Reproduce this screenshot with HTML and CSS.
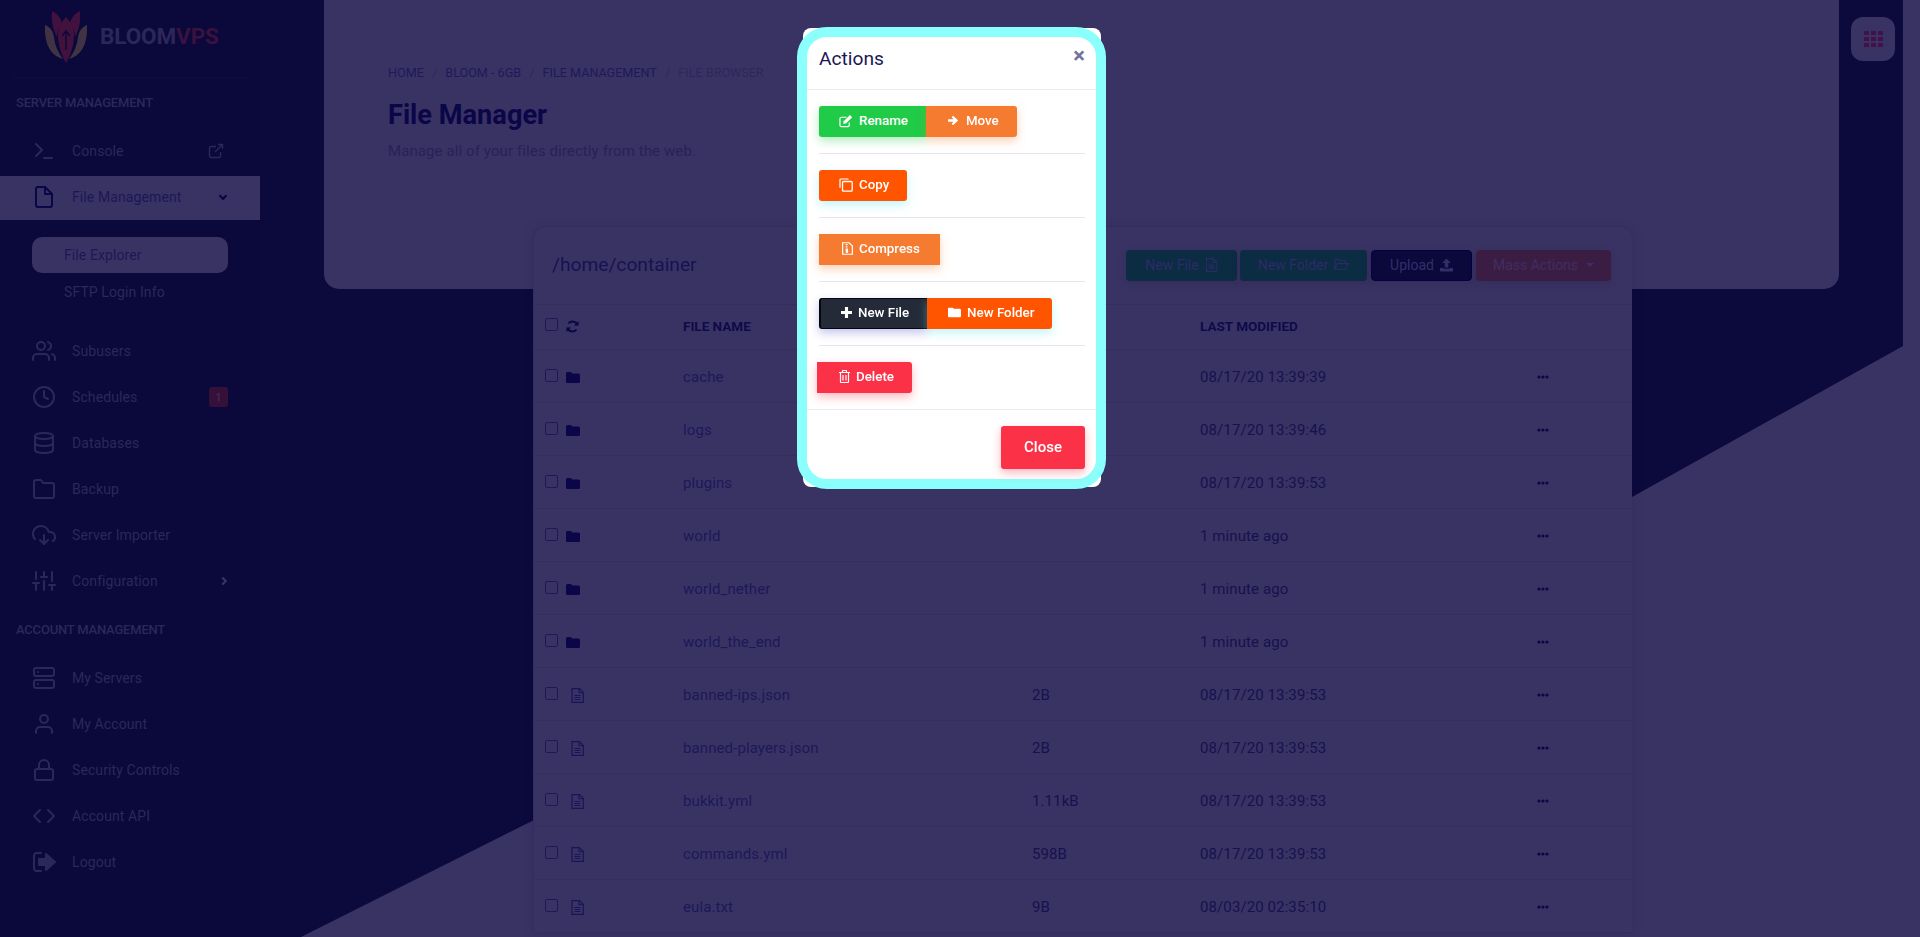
FILE: index.html
```html
<!DOCTYPE html>
<html lang="en">
<head>
    <meta charset="UTF-8">
    <title>BloomVPS - File Manager</title>
    <link rel="stylesheet" href="styles.css">
</head>
<body>
    <svg class="sprite" xmlns="http://www.w3.org/2000/svg">
        <symbol id="i-folder-solid" viewBox="0 0 14 11"><path d="M1.5 0h3.4l1.3 1.5h6.3A1.5 1.5 0 0 1 14 3v6.5A1.5 1.5 0 0 1 12.500 11h-11A1.500 1.500 0 0 1 0 9.500v-8A1.500 1.500 0 0 1 1.500 0z"/></symbol>
        <symbol id="i-doc" viewBox="0 0 13 15"><path d="M1 .7h7.500L12.300 4.500v9.800H1z" fill="none" stroke="currentColor" stroke-width="1.200"/><path d="M8 .7v4h4.300M3.500 7.500h6M3.500 9.500h6M3.500 11.500h6" fill="none" stroke="currentColor" stroke-width="1.100"/></symbol>
        <symbol id="i-dots" viewBox="0 0 12 4"><circle cx="2" cy="2" r="1.600"/><circle cx="6" cy="2" r="1.600"/><circle cx="10" cy="2" r="1.600"/></symbol>
    </svg>

    <aside class="sidebar">
        <div class="logo">
            <svg class="logo-mark" viewBox="0 0 44 54">
                <path d="M1 15c5 2 8 6 9 12 1 9 4 15 9 22C8 46 0 36 1 15z" fill="#3f3344"/>
                <path d="M43 15c-5 2-8 6-9 12-1 9-4 15-9 22 11-3 19-13 18-34z" fill="#3f3344"/>
                <path d="M8 1c6 3 9 7 10 13-3 3-5 8-5 13C9 20 7 11 8 1z" fill="#42123f"/>
                <path d="M36 1c-6 3-9 7-10 13 3 3 5 8 5 13 4-7 6-16 5-26z" fill="#42123f"/>
                <path d="M22 7c5 5 8 11 8 18 0 11-4 21-8 28-4-7-8-17-8-28 0-7 3-13 8-18z" fill="#42123f"/>
                <path d="M22 20v20M18 26l4-5 4 5" stroke="#0b083b" stroke-width="1.500" fill="none"/>
            </svg>
            <span class="logo-text">BLOOM<span class="logo-accent">VPS</span></span>
        </div>

        <div class="nav-label">SERVER MANAGEMENT</div>
        <a class="nav-row">
            <svg class="nav-icon" viewBox="0 0 24 24"><polyline points="4 17 10 11 4 5"/><line x1="12" y1="19" x2="20" y2="19"/></svg>
            <span class="nav-text">Console</span>
            <svg class="nav-end" viewBox="0 0 16 16"><path d="M12.500 9v4a1.500 1.500 0 0 1-1.500 1.500H3A1.500 1.500 0 0 1 1.500 13V5A1.500 1.500 0 0 1 3 3.500h5"/><path d="M10 1.500h4.500V6M14.500 1.500L7 9"/></svg>
        </a>
        <a class="nav-row active">
            <svg class="nav-icon" viewBox="0 0 24 24"><path d="M13 2H6a2 2 0 0 0-2 2v16a2 2 0 0 0 2 2h12a2 2 0 0 0 2-2V9z"/><polyline points="13 2 13 9 20 9"/></svg>
            <span class="nav-text">File Management</span>
            <svg class="nav-chevron" viewBox="0 0 10 10"><path d="M1.500 3.200L5 6.800l3.500-3.600"/></svg>
        </a>
        <div class="submenu">
            <a class="sub-row current">File Explorer</a>
            <a class="sub-row">SFTP Login Info</a>
        </div>
        <a class="nav-row">
            <svg class="nav-icon" viewBox="0 0 24 24"><path d="M17 21v-2a4 4 0 0 0-4-4H5a4 4 0 0 0-4 4v2"/><circle cx="9" cy="7" r="4"/><path d="M23 21v-2a4 4 0 0 0-3-3.870"/><path d="M16 3.130a4 4 0 0 1 0 7.750"/></svg>
            <span class="nav-text">Subusers</span>
        </a>
        <a class="nav-row">
            <svg class="nav-icon" viewBox="0 0 24 24"><circle cx="12" cy="12" r="10"/><polyline points="12 6 12 12 16 14"/></svg>
            <span class="nav-text">Schedules</span>
            <span class="nav-badge">1</span>
        </a>
        <a class="nav-row">
            <svg class="nav-icon" viewBox="0 0 24 24"><ellipse cx="12" cy="5" rx="9" ry="3"/><path d="M21 12c0 1.660-4 3-9 3s-9-1.340-9-3"/><path d="M3 5v14c0 1.660 4 3 9 3s9-1.340 9-3V5"/></svg>
            <span class="nav-text">Databases</span>
        </a>
        <a class="nav-row">
            <svg class="nav-icon" viewBox="0 0 24 24"><path d="M22 19a2 2 0 0 1-2 2H4a2 2 0 0 1-2-2V5a2 2 0 0 1 2-2h5l2 3h9a2 2 0 0 1 2 2z"/></svg>
            <span class="nav-text">Backup</span>
        </a>
        <a class="nav-row">
            <svg class="nav-icon" viewBox="0 0 24 24"><polyline points="8 17 12 21 16 17"/><line x1="12" y1="12" x2="12" y2="21"/><path d="M20.880 18.090A5 5 0 0 0 18 9h-1.260A8 8 0 1 0 3 16.290"/></svg>
            <span class="nav-text">Server Importer</span>
        </a>
        <a class="nav-row">
            <svg class="nav-icon" viewBox="0 0 24 24"><path d="M4 21v-7M4 10V3M12 21v-9M12 8V3M20 21v-5M20 12V3M1 14h6M9 8h6M17 16h6"/></svg>
            <span class="nav-text">Configuration</span>
            <svg class="nav-chevron side" viewBox="0 0 10 10"><path d="M3.200 1.500L6.800 5 3.200 8.500"/></svg>
        </a>

        <div class="nav-label second">ACCOUNT MANAGEMENT</div>
        <a class="nav-row">
            <svg class="nav-icon" viewBox="0 0 24 24"><rect x="2" y="2" width="20" height="8" rx="2"/><rect x="2" y="14" width="20" height="8" rx="2"/><line x1="6" y1="6" x2="6.010" y2="6"/><line x1="6" y1="18" x2="6.010" y2="18"/></svg>
            <span class="nav-text">My Servers</span>
        </a>
        <a class="nav-row">
            <svg class="nav-icon" viewBox="0 0 24 24"><path d="M20 21v-2a4 4 0 0 0-4-4H8a4 4 0 0 0-4 4v2"/><circle cx="12" cy="7" r="4"/></svg>
            <span class="nav-text">My Account</span>
        </a>
        <a class="nav-row">
            <svg class="nav-icon" viewBox="0 0 24 24"><rect x="3" y="11" width="18" height="11" rx="2"/><path d="M7 11V7a5 5 0 0 1 10 0v4"/></svg>
            <span class="nav-text">Security Controls</span>
        </a>
        <a class="nav-row">
            <svg class="nav-icon" viewBox="0 0 24 24"><polyline points="16 18 22 12 16 6"/><polyline points="8 6 2 12 8 18"/></svg>
            <span class="nav-text">Account API</span>
        </a>
        <a class="nav-row">
            <svg class="nav-icon" viewBox="0 0 24 24"><path d="M9 3H4.500A2.500 2.500 0 0 0 2 5.500v13A2.500 2.500 0 0 0 4.500 21H9"/><path class="solid" d="M7 9h7V4l9 8-9 8v-5H7z"/></svg>
            <span class="nav-text">Logout</span>
        </a>
    </aside>

    <main class="main">
        <div class="main-bg"></div>
        <button class="apps-btn">
            <span class="apps-grid"><i></i><i></i><i></i><i></i><i></i><i></i><i></i><i></i><i></i></span>
        </button>

        <header class="page-head">
            <nav class="crumbs">
                <a>HOME</a><span class="crumb-sep">/</span>
                <a>BLOOM - 6GB</a><span class="crumb-sep">/</span>
                <a>FILE MANAGEMENT</a><span class="crumb-sep">/</span>
                <span class="crumb-last">FILE BROWSER</span>
            </nav>
            <h1>File Manager</h1>
            <p class="page-sub">Manage all of your files directly from the web.</p>
        </header>

        <section class="files-card">
            <div class="files-top">
                <h2>/home/container</h2>
                <div class="files-actions">
                    <a class="top-btn teal">New File
                        <svg viewBox="0 0 13 15"><use href="#i-doc"/></svg>
                    </a>
                    <a class="top-btn teal wide">New Folder
                        <svg viewBox="0 0 16 13"><path d="M1 11.500V2.500A1.500 1.500 0 0 1 2.500 1h3L7 2.500h4A1.500 1.500 0 0 1 12.500 4v1.500M1 11.500L3.500 5.500H15l-2.500 6z" fill="none" stroke="currentColor" stroke-width="1.200"/></svg>
                    </a>
                    <a class="top-btn navy">Upload
                        <svg viewBox="0 0 13 13"><path d="M6.500 0L11 4.500H8.300V9H4.700V4.500H2zM0 9.500h3.500v.8h6v-.8H13V13H0z" fill="currentColor"/></svg>
                    </a>
                    <a class="top-btn plum">Mass Actions <span class="caret"></span></a>
                </div>
            </div>

            <div class="file-row head">
                <div class="cell-check"><span class="check"></span>
                    <svg class="refresh" viewBox="0 0 14 14"><path d="M12.500 5.500A5.700 5.700 0 0 0 2.600 3.800M1.500 8.500a5.700 5.700 0 0 0 9.900 1.700" fill="none" stroke="currentColor" stroke-width="2"/><path d="M13.500 1v5h-5zM.5 13V8h5z" fill="currentColor"/></svg>
                </div>
                <div>FILE NAME</div><div></div><div>LAST MODIFIED</div><div></div>
            </div>

            <div class="file-row">
                <div class="cell-check"><span class="check"></span><svg class="ic-folder"><use href="#i-folder-solid"/></svg></div>
                <div class="name">cache</div><div class="size"></div><div class="date">08/17/20 13:39:39</div>
                <div><svg class="dots"><use href="#i-dots"/></svg></div>
            </div>
            <div class="file-row">
                <div class="cell-check"><span class="check"></span><svg class="ic-folder"><use href="#i-folder-solid"/></svg></div>
                <div class="name">logs</div><div class="size"></div><div class="date">08/17/20 13:39:46</div>
                <div><svg class="dots"><use href="#i-dots"/></svg></div>
            </div>
            <div class="file-row">
                <div class="cell-check"><span class="check"></span><svg class="ic-folder"><use href="#i-folder-solid"/></svg></div>
                <div class="name">plugins</div><div class="size"></div><div class="date">08/17/20 13:39:53</div>
                <div><svg class="dots"><use href="#i-dots"/></svg></div>
            </div>
            <div class="file-row">
                <div class="cell-check"><span class="check"></span><svg class="ic-folder"><use href="#i-folder-solid"/></svg></div>
                <div class="name">world</div><div class="size"></div><div class="date">1 minute ago</div>
                <div><svg class="dots"><use href="#i-dots"/></svg></div>
            </div>
            <div class="file-row">
                <div class="cell-check"><span class="check"></span><svg class="ic-folder"><use href="#i-folder-solid"/></svg></div>
                <div class="name">world_nether</div><div class="size"></div><div class="date">1 minute ago</div>
                <div><svg class="dots"><use href="#i-dots"/></svg></div>
            </div>
            <div class="file-row">
                <div class="cell-check"><span class="check"></span><svg class="ic-folder"><use href="#i-folder-solid"/></svg></div>
                <div class="name">world_the_end</div><div class="size"></div><div class="date">1 minute ago</div>
                <div><svg class="dots"><use href="#i-dots"/></svg></div>
            </div>
            <div class="file-row">
                <div class="cell-check"><span class="check"></span><svg class="ic-doc"><use href="#i-doc"/></svg></div>
                <div class="name">banned-ips.json</div><div class="size">2B</div><div class="date">08/17/20 13:39:53</div>
                <div><svg class="dots"><use href="#i-dots"/></svg></div>
            </div>
            <div class="file-row">
                <div class="cell-check"><span class="check"></span><svg class="ic-doc"><use href="#i-doc"/></svg></div>
                <div class="name">banned-players.json</div><div class="size">2B</div><div class="date">08/17/20 13:39:53</div>
                <div><svg class="dots"><use href="#i-dots"/></svg></div>
            </div>
            <div class="file-row">
                <div class="cell-check"><span class="check"></span><svg class="ic-doc"><use href="#i-doc"/></svg></div>
                <div class="name">bukkit.yml</div><div class="size">1.11kB</div><div class="date">08/17/20 13:39:53</div>
                <div><svg class="dots"><use href="#i-dots"/></svg></div>
            </div>
            <div class="file-row">
                <div class="cell-check"><span class="check"></span><svg class="ic-doc"><use href="#i-doc"/></svg></div>
                <div class="name">commands.yml</div><div class="size">598B</div><div class="date">08/17/20 13:39:53</div>
                <div><svg class="dots"><use href="#i-dots"/></svg></div>
            </div>
            <div class="file-row">
                <div class="cell-check"><span class="check"></span><svg class="ic-doc"><use href="#i-doc"/></svg></div>
                <div class="name">eula.txt</div><div class="size">9B</div><div class="date">08/03/20 02:35:10</div>
                <div><svg class="dots"><use href="#i-dots"/></svg></div>
            </div>
        </section>
    </main>

    <div class="modal">
        <div class="modal-frame">
            <div class="modal-head">
                <h3>Actions</h3>
                <span class="modal-x">&times;</span>
            </div>
            <div class="modal-body">
                <div class="action-group">
                    <a class="act green">
                        <svg class="ic-edit" viewBox="0 0 15 14"><path d="M11 8.500v3A1.500 1.500 0 0 1 9.500 13h-7A1.500 1.500 0 0 1 1 11.500v-7A1.500 1.500 0 0 1 2.500 3H8" fill="none" stroke="currentColor" stroke-width="1.300"/><path d="M5 7.200L11.700.6l2.400 2.300-6.700 6.700-2.900.4z" fill="currentColor"/></svg>
                        Rename</a><a class="act orange">
                        <svg class="ic-move" viewBox="0 0 13 13"><path d="M0 5h6.500L4.300 2.700 6 1l6 5.500L6 12l-1.700-1.700L6.500 8H0z" fill="currentColor"/></svg>
                        Move</a>
                </div>
                <div class="action-group">
                    <a class="act flame">
                        <svg class="ic-edit" viewBox="0 0 14 14"><path d="M9.500 1H1.800a.8.800 0 0 0-.8.800v8" fill="none" stroke="currentColor" stroke-width="1.200"/><rect x="3.500" y="3.500" width="9.700" height="9.700" rx="1" fill="none" stroke="currentColor" stroke-width="1.300"/></svg>
                        Copy</a>
                </div>
                <div class="action-group">
                    <a class="act orange square">
                        <svg viewBox="0 0 12 14"><path d="M.7.700h7L11.300 4.300v9H.7z" fill="none" stroke="currentColor" stroke-width="1.300"/><path d="M4 2h2v1.500H4zM4 4.500h2V6H4zM4 7h2.400l.4 3.500a1.400 1.400 0 1 1-2.800 0z" fill="currentColor"/></svg>
                        Compress</a>
                </div>
                <div class="action-group">
                    <a class="act dark">
                        <svg viewBox="0 0 12 12"><path d="M4.300 0h3.400v4.300H12v3.400H7.700V12H4.300V7.700H0V4.300h4.300z" fill="currentColor"/></svg>
                        New File</a><a class="act flame">
                        <svg class="ic-move" viewBox="0 0 14 11"><use href="#i-folder-solid" fill="currentColor"/></svg>
                        New Folder</a>
                </div>
                <div class="action-group last">
                    <a class="act red pulled">
                        <svg viewBox="0 0 11 13"><path d="M0 2.500h11M3.500 2.500V1.200A.7.700 0 0 1 4.200.5h2.600a.7.700 0 0 1 .7.700v1.300M1.500 2.500v9A1.200 1.200 0 0 0 2.700 12.700h5.600a1.200 1.200 0 0 0 1.200-1.200v-9M4 5v5.500M7 5v5.500" fill="none" stroke="currentColor" stroke-width="1.200"/></svg>
                        Delete</a>
                </div>
            </div>
            <div class="modal-foot">
                <a class="close-btn">Close</a>
            </div>
        </div>
    </div>
</body>
</html>
```

FILE: styles.css
```css
:root {
    --navy: #0b083b;
    --navy-main: #0c093d;
    --lavender: #393363;
    --line: #342e5d;
    --ink: #0a0648;
    --ink-soft: #1c1758;
    --muted: #2c275b;
    --cyan: #8bfffb;
    --font: 'Roboto', 'Liberation Sans', sans-serif;
}

* {
    margin: 0;
    padding: 0;
    box-sizing: border-box;
}

html, body {
    height: 100%;
    overflow: hidden;
}

body {
    display: flex;
    background: var(--lavender);
    font-family: var(--font);
    color: var(--ink-soft);
}

a {
    text-decoration: none;
}

.sprite {
    display: none;
}

/* sidebar */
.sidebar {
    width: 260px;
    flex-shrink: 0;
    height: 937px;
    background: var(--navy);
    position: relative;
    z-index: 2;
}

.logo {
    height: 78px;
    margin: 0 13px;
    padding-left: 31px;
    display: flex;
    align-items: center;
    gap: 12px;
    border-bottom: 1px solid #100d42;
}

.logo-mark {
    width: 44px;
    height: 54px;
    margin-top: -3px;
}

.logo-text {
    font-size: 22.500px;
    font-weight: 700;
    letter-spacing: -0.1px;
    color: #2c275b;
    margin-top: -5px;
}

.logo-accent {
    color: #3a1240;
}

.nav-label {
    margin-top: 17px;
    margin-bottom: 17px;
    padding-left: 16px;
    height: 16px;
    line-height: 16px;
    font-size: 13px;
    font-weight: 500;
    letter-spacing: -0.2px;
    color: var(--muted);
}

.nav-label.second {
    margin-top: 18px;
}

.nav-row {
    height: 46px;
    padding: 0 32px;
    display: flex;
    align-items: center;
    gap: 16px;
    color: var(--muted);
}

.nav-row.active {
    height: 44px;
    margin-top: 2px;
    padding-bottom: 2px;
    background: var(--lavender);
    color: var(--ink);
}

.nav-icon {
    width: 24px;
    height: 24px;
    fill: none;
    stroke: currentColor;
    stroke-width: 2;
    stroke-linecap: round;
    stroke-linejoin: round;
    flex-shrink: 0;
}

.nav-icon .solid {
    fill: currentColor;
}

.nav-text {
    flex: 1;
    font-size: 14px;
    letter-spacing: 0.1px;
    white-space: nowrap;
}

.nav-row.active .nav-text {
    color: var(--ink-soft);
}

.nav-end {
    width: 16px;
    height: 16px;
    margin-right: 4px;
    fill: none;
    stroke: currentColor;
    stroke-width: 1.4;
}

.nav-chevron {
    width: 10px;
    height: 10px;
    fill: none;
    stroke: currentColor;
    stroke-width: 2.200;
}

.nav-chevron.side {
    margin-right: -1px;
    stroke: var(--lavender);
}

.nav-badge {
    width: 19px;
    height: 20px;
    border-radius: 3px;
    background: #351039;
    color: #432655;
    font-size: 11px;
    font-weight: 700;
    display: flex;
    align-items: center;
    justify-content: center;
}

.submenu {
    padding: 17px 32px 18px;
}

.sub-row {
    display: flex;
    align-items: center;
    height: 36px;
    padding-left: 32px;
    border-radius: 10px;
    font-size: 14px;
    letter-spacing: 0.1px;
    color: var(--muted);
}

.sub-row + .sub-row {
    margin-top: 1px;
}

.sub-row.current {
    background: var(--lavender);
    color: var(--ink-soft);
}

/* main area */
.main {
    flex: 1;
    position: relative;
    height: 937px;
    overflow: hidden;
    padding-left: 64px;
    background: var(--lavender);
}

.main-bg {
    position: absolute;
    inset: 0;
    background: var(--navy-main);
    clip-path: polygon(0 0, 1643px 0, 1643px 346px, 1372px 497px, 1000px 600px, 272px 821px, 41px 937px, 0 937px);
}

.apps-btn {
    position: absolute;
    top: 17px;
    left: 1591px;
    width: 44px;
    height: 44px;
    border: 0;
    border-radius: 12px;
    background: var(--lavender);
    display: flex;
    align-items: center;
    justify-content: center;
}

.apps-grid {
    display: grid;
    grid-template-columns: repeat(3, 5px);
    grid-auto-rows: 4px;
    gap: 2px;
}

.apps-grid i {
    background: #431149;
}

.page-head {
    position: relative;
    width: 1515px;
    height: 289px;
    padding: 63px 64px 0;
    background: var(--lavender);
    border-radius: 0 0 15px 15px;
}

.crumbs {
    display: flex;
    align-items: center;
    height: 18px;
    font-size: 12.600px;
    color: #1e195c;
}

.crumb-sep {
    width: 21.500px;
    text-align: center;
    color: #2d285b;
}

.crumb-last {
    color: #2d285a;
}

h1 {
    margin-top: 16px;
    font-size: 27.200px;
    font-weight: 700;
    line-height: 36px;
    color: var(--ink);
}

.page-sub {
    margin-top: 8px;
    font-size: 15px;
    line-height: 20px;
    letter-spacing: 0.1px;
    color: #272258;
}

/* file table */
.files-card {
    position: relative;
    width: 1099px;
    margin: -63px 0 0 209px;
    background: var(--lavender);
    border-left: 1px solid var(--line);
    border-top: 1px solid var(--line);
    border-radius: 12px 12px 0 0;
    box-shadow: 0 0 12px rgba(20, 15, 70, 0.12);
}

.files-top {
    height: 78px;
    padding: 0 21px 2px 18px;
    display: flex;
    align-items: center;
    justify-content: space-between;
    border-bottom: 1px solid var(--line);
}

h2 {
    font-size: 19.200px;
    font-weight: 400;
    color: #171252;
}

.files-actions {
    display: flex;
    gap: 3px;
    margin-top: 2px;
}

.top-btn {
    height: 31px;
    padding-bottom: 2px;
    display: flex;
    align-items: center;
    justify-content: center;
    gap: 6px;
    border-radius: 4px;
    font-size: 14px;
    color: #2d2b66;
    box-shadow: 0 3px 8px rgba(20, 15, 70, 0.15);
}

.top-btn svg {
    width: 13px;
    height: 14px;
}

.top-btn.teal {
    width: 111px;
    background: #0b2c43;
}

.top-btn.wide {
    width: 127px;
}

.top-btn.wide svg {
    width: 15px;
    height: 13px;
}

.top-btn.navy {
    width: 101px;
    margin-left: 1px;
    background: var(--navy);
    border: 1px solid #030142;
    color: #332e6a;
}

.top-btn.plum {
    width: 135px;
    margin-left: 1px;
    background: #3b1d44;
    color: #412d61;
}

.caret {
    width: 0;
    height: 0;
    margin-left: 2px;
    border: 4px solid transparent;
    border-top-color: #412d61;
    border-bottom: 0;
}

.file-row {
    display: grid;
    grid-template-columns: 138px 349px 168px 337px 1fr;
    align-items: center;
    height: 53px;
    padding: 2px 0 0 11px;
    border-bottom: 1px solid var(--line);
    font-size: 15px;
    letter-spacing: 0.1px;
}

.file-row.head {
    height: 45px;
    padding: 0 0 2px 11px;
    font-size: 13.500px;
    font-weight: 700;
    letter-spacing: 0;
    color: #0e0a4b;
}

.cell-check {
    display: flex;
    align-items: center;
    gap: 8px;
}

.check {
    width: 13px;
    height: 13px;
    margin-top: -3px;
    border: 1px solid #1e1956;
    border-radius: 2px;
}

.refresh {
    width: 13px;
    height: 13px;
    color: var(--ink);
}

.ic-folder {
    width: 14px;
    height: 11px;
    fill: var(--ink);
}

.ic-doc {
    width: 13px;
    height: 15px;
    margin-left: 5px;
    color: #191458;
}

.name {
    color: #1c185a;
}

.size, .date {
    color: #16114f;
}

.dots {
    width: 12px;
    height: 4px;
    display: block;
    fill: var(--ink);
}

/* actions modal */
.modal {
    position: fixed;
    top: 28px;
    left: 803px;
    width: 298px;
    height: 459px;
    background: #fff;
    border-radius: 8px;
    z-index: 10;
}

.modal-frame {
    margin: -1px -5px 0 -6px;
    height: 462px;
    background: #fff;
    border: 10px solid var(--cyan);
    border-radius: 30px;
    display: flex;
    flex-direction: column;
}

.modal-head {
    height: 53px;
    padding: 0 12px;
    display: flex;
    align-items: flex-start;
    justify-content: space-between;
    border-bottom: 1px solid #e9ecf3;
    flex-shrink: 0;
}

.modal-head h3 {
    margin-top: 9px;
    font-size: 19.200px;
    line-height: 26px;
    font-weight: 400;
    color: #1c1756;
}

.modal-x {
    margin: 6px -1px 0 0;
    font-size: 22px;
    line-height: 26px;
    font-weight: 700;
    color: #74719a;
}

.modal-body {
    padding: 16px 11px 0 12px;
    flex-shrink: 0;
}

.action-group {
    display: flex;
    padding-bottom: 16px;
    margin-bottom: 16px;
    border-bottom: 1px solid #e5e6ec;
}

.action-group.last {
    margin-bottom: 0;
    border-bottom: 0;
    padding-bottom: 16px;
}

.act {
    height: 31px;
    padding: 0 18px 2px 22px;
    display: flex;
    align-items: center;
    gap: 6px;
    border-radius: 3px;
    font-size: 13.330px;
    font-weight: 500;
    color: #fff;
    white-space: nowrap;
}

.act svg {
    width: 11px;
    height: 13px;
    flex-shrink: 0;
}

.act .ic-edit {
    width: 14px;
    height: 14px;
}

.act .ic-move {
    width: 13px;
    height: 11px;
}

.act:has(.ic-edit) {
    padding-left: 20px;
}

.act:has(.ic-move) {
    padding-left: 21px;
}

.act + .act {
    border-radius: 0 3px 3px 0;
}

.act:first-child:not(:last-child) {
    border-radius: 3px 0 0 3px;
}

.green {
    background: #1fcb47;
    box-shadow: 0 4px 10px rgba(31, 203, 71, 0.35);
}

.orange {
    background: #f57b30;
    box-shadow: 0 4px 10px rgba(245, 123, 48, 0.35);
}

.orange.square {
    border-radius: 0;
    padding-left: 23px;
    padding-right: 20px;
}

.flame {
    background: #ff5500;
    box-shadow: 0 4px 10px rgba(100, 230, 240, 0.4);
}

.dark {
    background: #252a38;
    border: 1px solid #05070d;
    border-width: 1px 0 1px 2px;
    padding-left: 20px;
    box-shadow: 0 4px 10px rgba(60, 60, 200, 0.3);
}

.red {
    background: #fb3148;
    box-shadow: 0 4px 10px rgba(251, 49, 72, 0.35);
}

.pulled {
    margin-left: -2px;
    border-radius: 0 3px 3px 0;
}

.modal-foot {
    flex: 1;
    padding: 16px 11px 0 0;
    display: flex;
    justify-content: flex-end;
    align-items: flex-start;
    border-top: 1px solid #e9ecf3;
}

.close-btn {
    width: 84px;
    height: 43px;
    display: flex;
    align-items: center;
    justify-content: center;
    padding-bottom: 1px;
    border-radius: 3px;
    background: #fb3148;
    box-shadow: 0 4px 10px rgba(251, 49, 72, 0.35);
    color: #fff;
    font-size: 15px;
    font-weight: 500;
}
```
